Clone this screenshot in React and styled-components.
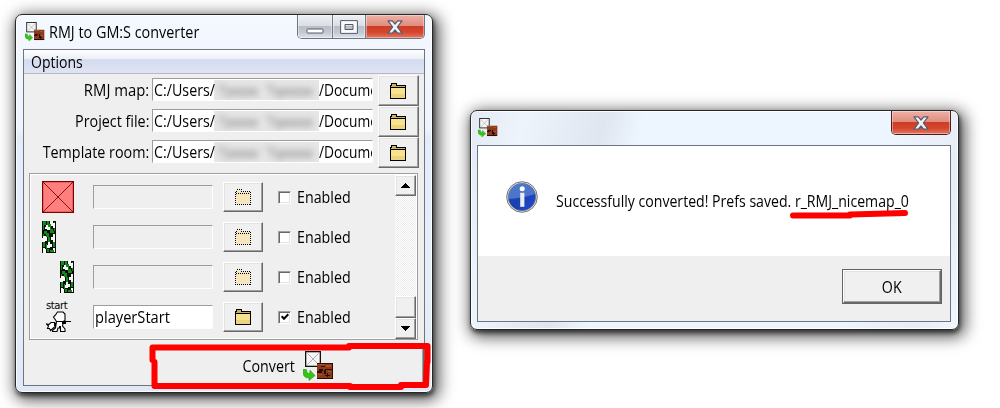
import React from "react";
import styled, { createGlobalStyle, css } from "styled-components";

const Global = createGlobalStyle`
  * { box-sizing: border-box; }
  body { margin: 0; background: #fff; overflow: hidden; }
`;

const Desktop = styled.main`
  position: relative;
  width: 1000px;
  height: 408px;
  overflow: hidden;
  background: #fff;
  font-family: "Open Sans", "Noto Sans", sans-serif;
  font-size: 15.5px;
  line-height: 20px;
  color: #000;
`;

const Window = styled.section`
  position: absolute;
  left: ${(p) => p.$x}px;
  top: ${(p) => p.$y}px;
  width: ${(p) => p.$w}px;
  height: ${(p) => p.$h}px;
  display: flex;
  flex-direction: column;
  border: 1px solid #26282c;
  border-radius: 7px;
  background: ${(p) => p.$glass};
  box-shadow: inset 0 0 0 1px rgba(255, 255, 255, 0.85), 1px 3px 4px rgba(0, 0, 0, 0.55),
    3px 4px 16px 3px rgba(0, 0, 0, 0.66);
`;

const TitleBar = styled.header`
  display: flex;
  align-items: flex-start;
  height: 34px;
  flex: none;
  padding: 0 7px 0 ${(p) => p.$left}px;
`;

const TitleIcon = styled.span`
  display: flex;
  margin-top: 7px;
  width: 24px;
`;

const Text = styled.span`
  display: inline-block;
  white-space: pre;
  transform: scaleX(${(p) => p.$fit || 0.92});
  transform-origin: ${(p) => p.$origin || "left"} center;
`;

const Title = styled.h1`
  margin: 7px 0 0;
  flex: 1;
  font: inherit;
`;

const Controls = styled.div`
  display: flex;
  height: 24px;
  margin-left: auto;
  border: 1px solid ${(p) => (p.$solo ? "#4f1c18" : "#6e7480")};
  border-top: 0;
  border-radius: 0 0 5px 5px;
  overflow: hidden;
`;

const Control = styled.button`
  display: flex;
  align-items: center;
  justify-content: center;
  width: ${(p) => p.$w}px;
  padding: 0;
  border: 0;
  border-right: ${(p) => (p.$close ? 0 : "1px solid #747a86")};
  background: ${(p) =>
    p.$close
      ? "linear-gradient(#efb0a5 0, #e08b7d 48%, #cb3f27 50%, #d6452c 75%, #de7a66 100%)"
      : "linear-gradient(#edf0f5 0, #dadde3 48%, #b9bec8 50%, #c3c9d3 75%, #dce3ed 100%)"};
  box-shadow: inset 0 0 0 1px rgba(255, 255, 255, 0.4);
`;

const Client = styled.div`
  display: flex;
  flex-direction: column;
  flex: 1;
  margin: ${(p) => p.$m};
  border: 1px solid #6f7580;
  background: #efefef;
`;

const MenuBar = styled.nav`
  height: 24px;
  flex: none;
  padding: 2px 7px;
  border-bottom: 1px solid #b4b8c8;
  background: linear-gradient(#fff 0, #eceff8 38%, #d4dbee 42%, #dfe4f4 100%);
`;

const Paths = styled.div`
  padding-top: 1px;
  height: 94px;
  flex: none;
`;

const PathRow = styled.div`
  display: flex;
  align-items: flex-start;
  height: 31px;
`;

const PathLabel = styled.label`
  width: 125px;
  margin-right: 3px;
  text-align: right;
  padding-top: 5px;
`;

const sunken = css`
  border-style: solid;
  border-width: 1px;
  border-color: #9c9c9c #fdfdfd #fdfdfd #9c9c9c;
`;

const Entry = styled.div`
  ${sunken}
  display: flex;
  align-items: center;
  flex: none;
  height: ${(p) => (p.$path ? 23 : 24)}px;
  margin-top: ${(p) => (p.$path ? 3 : 0)}px;
  width: ${(p) => (p.$path ? 221 : 120)}px;
  padding-left: 1px;
  overflow: hidden;
  background: ${(p) => (p.$off ? "#efefef" : "#fff")};
`;

const PathHead = styled.span`
  flex: none;
  width: 60px;
`;

const Redacted = styled.span`
  flex: none;
  width: 105px;
  height: 20px;
  background: #e6e6e6;
  overflow: hidden;
  > svg { display: block; filter: blur(3px); }
`;

const Raised = styled.button`
  display: flex;
  align-items: center;
  justify-content: center;
  width: ${(p) => p.$w}px;
  height: ${(p) => p.$h}px;
  margin-left: ${(p) => p.$gap || 0}px;
  flex: none;
  padding: 0 ${(p) => p.$w % 2}px 0 0;
  border: 1px solid;
  border-color: #fff #696969 #696969 #fff;
  box-shadow: inset -1px -1px #a0a0a0, inset 1px 1px #e3e3e3;
  background: #f0f0f0;
  font: inherit;
  color: inherit;
`;

const Group = styled.div`
  display: flex;
  height: 167px;
  flex: none;
  margin: 5px 6px 0 5px;
  border: 1px solid #9e9e9e;
  box-shadow: inset 1px 1px #fff, inset -1px -1px #fff;
  padding: 1px 1px 0;
`;

const Rows = styled.div`
  flex: 1;
  padding-top: 2px;
`;

const Row = styled.div`
  display: flex;
  align-items: center;
  height: 40px;
  padding-left: 11px;
`;

const Sprite = styled.div`
  display: flex;
  justify-content: ${(p) => (p.$end ? "flex-end" : "flex-start")};
  width: 32px;
  margin-right: 19px;
`;

const StartSprite = styled.div`
  display: flex;
  flex-direction: column;
  width: 32px;
  height: 32px;
  padding-left: 4px;
  font: 10px/10px "DejaVu Sans", sans-serif;
  letter-spacing: -0.4px;
`;

const Check = styled.span`
  display: flex;
  align-items: center;
  justify-content: center;
  width: 13px;
  height: 13px;
  margin: 0 6px 0 15px;
  border: 1px solid;
  border-color: #a0a0a0 #fff #fff #a0a0a0;
  box-shadow: inset 1px 1px #696969, inset -1px -1px #e3e3e3;
  background: #fff;
`;

const Scroll = styled.div`
  display: flex;
  flex-direction: column;
  width: 21px;
  background: repeating-conic-gradient(#fff 0 25%, #ebebeb 0 50%) 0 0 / 2px 2px;
`;

const Track = styled.div`
  flex: 1;
`;

const ConvertButton = styled.button`
  display: flex;
  align-items: center;
  gap: 8px;
  height: 40px;
  margin: 5px 0 0 130px;
  padding: 2px 0 0 84px;
  border: 0;
  border-right: 1px solid #696969;
  box-shadow: inset -1px 0 #a0a0a0;
  background: #efefef;
  font: inherit;
  color: inherit;
`;

const Message = styled.div`
  display: flex;
  align-items: flex-start;
  height: 110px;
  padding: 35px 0 0 28px;
  gap: 18px;
  background: #fff;
`;

const MessageText = styled.p`
  margin: 10px 0 0;
`;

const Actions = styled.footer`
  display: flex;
  justify-content: flex-end;
  padding: 13px 8px 0;
`;

const DefaultFrame = styled.div`
  border: 1px solid #646464;
`;

const Marks = styled.svg`
  position: absolute;
  left: 0;
  top: 0;
  pointer-events: none;
`;

function AppIcon({ size = 31 }) {
  return (
    <svg width={size} height={size} viewBox="0 0 31 31">
      <path d="M2 0h16v16H2z" fill="#111" />
      <path d="M3.300 1.300h13.400v13.400H3.300z" fill="#f6f6f6" />
      <path d="M4.500 2.500l11 11M15.500 2.500l-11 11" stroke="#a5a5a5" strokeWidth=".9" />
      <path d="M14 12h16v16H14z" fill="#8c3a1c" />
      <g shapeRendering="crispEdges">
        <path d="M14 12h16v1H14zM18 15h4v1h-4zM22 18h8v1h-8zM16 18h4v2h-1v2h-2v-2h-1zM14 20h3v2h-3zM21 19h2v4h-2zM24 22h1v4h-1zM14 27h16v1H14zM22 24h5v1h-5zM29 13h1v15h-1z" fill="#2a0d05" />
        <path d="M15 13h6v1h-6zM23 14h5v2h-5zM25 20h3v1h-3zM15 23h4v1h-4z" fill="#a9502d" />
      </g>
      <path d="M0 18.500q-1 6 3 8l3 .4v2.600l6-5-5-5.300-.3 3.400q-3 .2-3.200-4z" fill="#35c516" stroke="#25960f" strokeWidth=".6" />
    </svg>
  );
}

function Folder({ off }) {
  return (
    <svg width="16" height="16" viewBox="0 0 16 16" shapeRendering="crispEdges">
      <path d="M1 2h1V1h5v2h8v12H1z" fill={off ? "#f5e6bd" : "#f7e290"} />
      {!off && <path d="M1 2h1V1h5v2h8v1H1z" fill="#c9b55e" />}
      {!off && <path d="M1 11h14v4H1z" fill="#ecd37d" />}
      <path
        d="M.5 15.500V2.500h1V.5h5v2h9v13zM1 4.500h14"
        fill="none"
        stroke="#000"
        strokeDasharray={off ? "1 1" : undefined}
      />
    </svg>
  );
}

function CloseGlyph() {
  return (
    <svg width="16" height="14" viewBox="0 0 16 14">
      <path d="M1 .8h4.300L8 4 10.700.8H15L10.300 7l4.700 6.200h-4.300L8 10l-2.700 3.200H1L5.700 7z" fill="#f2f2f2" stroke="#545b70" strokeWidth="1.200" strokeLinejoin="round" />
    </svg>
  );
}

function Close({ w }) {
  return <Control $w={w} $close aria-label="Close"><CloseGlyph /></Control>;
}

function Block() {
  return (
    <svg width="32" height="32" viewBox="0 0 32 32">
      <rect x=".5" y=".5" width="31" height="31" fill="#ff7f7f" stroke="#800000" />
      <rect x="1.500" y="1.500" width="29" height="29" fill="none" stroke="#e86464" />
      <path d="M1 1l30 30M31 1L1 31" stroke="#800000" strokeWidth=".9" />
    </svg>
  );
}

function Vine() {
  return (
    <svg width="14" height="32" viewBox="0 0 14 32" shapeRendering="crispEdges">
      <path d="M0 0h14v32H0z" fill="#050d05" />
      <path d="M1 0h3v4H2v5H1zM5 0h2v3h2v5h2v4H8V8H6V4H5zM12 1h1v9h-1zM2 10h3v2h2v4H4v-3H2zM9 10h3v2H9zM1 13h1v2H1zM6 16h2v5H6zM1 21h2v5H1zM11 20h2v6h-2zM4 23h1v5h2v3H5v-3H4zM8 29h4v2H8z" fill="#12891c" />
      <path d="M4 4h2v2h2v3H5V8H3V6h1zM8 0h3v2h2v5h-2V5H9V3H8zM1 15h3v1h1v4H3v1H0v-4h1zM11 13h2v8h-2v-2H9v-3h2zM6 21h2v2h2v3H8v1H5v-3h1zM1 27h2v1h1v4H1zM11 27h2v4h-1v-2h-1z" fill="#f7f7f7" />
    </svg>
  );
}

function Hero() {
  return (
    <svg width="25" height="22" viewBox="0 0 25 22">
      <g fill="#fff" stroke="#000" strokeWidth="1.100">
        <path d="M8.500 11.500H5l-2 2-2.500-.5 2 2-1 2.500h2l1 2 4-3.500 3-1.500z" />
        <path d="M10.500 10.500h7l-1 4.500 2.500 3v2.500h-4.500V17h-2.500l-1 3.500H6.500v-1l3-2.500z" />
        <path d="M8.500 7.500l-1-1.500 2-2 2-3h5.500l2 2v6.500l-2 1h-6.500z" />
      </g>
      <g shapeRendering="crispEdges">
        <path d="M16 10h9v1h-5v2h-4zM8 12h2v3H8zM13 15h2v2h-2z" />
      </g>
    </svg>
  );
}

function InfoIcon() {
  return (
    <svg width="32" height="32" viewBox="0 0 32 32">
      <defs>
        <linearGradient id="orb" x1="0" y1="0" x2="1" y2="1">
          <stop offset="0" stopColor="#1e4fae" />
          <stop offset=".5" stopColor="#1740b0" />
          <stop offset="1" stopColor="#2348d8" />
        </linearGradient>
      </defs>
      <circle cx="16" cy="16" r="15.300" fill="#e7e7e7" stroke="#737373" strokeWidth="1" />
      <circle cx="16" cy="16" r="13.700" fill="url(#orb)" stroke="#687180" strokeWidth=".7" />
      <path d="M2.800 18A13.200 13.200 0 0 1 28.800 13Q19 17 2.800 18z" fill="#7ea6e5" opacity=".5" />
      <circle cx="16.200" cy="7.800" r="2.500" fill="#fff" />
      <path d="M14.200 11.800h4.200v14h-4.200z" fill="#ececec" />
    </svg>
  );
}

function NameBlur() {
  return (
    <svg width="105" height="21" viewBox="0 0 105 21">
      <path d="M3 5h10v3h-3v8H7V8H3zM13 8h31v8H15v3h-3zM51 5h10v3h-2v8h-3V8h-5zM61 8h38v8H68v3h-4v-3h-3z" fill="#bcbcbc" />
    </svg>
  );
}

function Arrow({ down }) {
  return (
    <svg width="9" height="5" viewBox="0 0 9 5" shapeRendering="crispEdges">
      <path d={down ? "M0 0h9v1H8v1H7v1H6v1H5v1H4V4H3V3H2V2H1V1H0z" : "M4 0h1v1h1v1h1v1h1v1h1v1H0V4h1V3h1V2h1V1h1z"} />
    </svg>
  );
}

function Tick() {
  return (
    <svg width="8" height="8" viewBox="0 0 8 8">
      <path d="M.7 3.200L3 5.700 7.300 1.300" fill="none" stroke="#000" strokeWidth="2" />
    </svg>
  );
}

const paths = [
  { label: "RMJ map:", fit: 0.958 },
  { label: "Project file:", fit: 0.925 },
  { label: "Template room:", fit: 0.925 },
];

const objects = [
  { sprite: <Block /> },
  { sprite: <Vine /> },
  { sprite: <Vine />, end: true },
  { sprite: <StartSprite>start<Hero /></StartSprite>, name: "playerStart", on: true },
];

function Converter() {
  return (
    <Window $x={15} $y={14} $w={418} $h={379} $glass="linear-gradient(#f4f8ff 0, #edf4fe 30%, #e3edf9 32%, #e6eefa 75%, #dfe8f4 100%)">
      <TitleBar $left={9}>
        <TitleIcon><AppIcon size={20} /></TitleIcon>
        <Title><Text $fit={0.928}>RMJ to GM:S converter</Text></Title>
        <Controls>
          <Control $w={35} aria-label="Minimize">
            <svg width="18" height="14" viewBox="0 0 18 14"><rect x="1" y="9" width="16" height="4" rx=".8" fill="#fff" stroke="#565b6c" /></svg>
          </Control>
          <Control $w={33} aria-label="Maximize">
            <svg width="18" height="14" viewBox="0 0 18 14"><path d="M.6.6h16.800v12.800H.6zM5 4.500v5h8v-5z" fill="#fafafa" fillRule="evenodd" stroke="#565b6c" /></svg>
          </Control>
          <Close w={58} />
        </Controls>
      </TitleBar>
      <Client $m="0 7px 6px">
        <MenuBar><Text $fit={0.905}>Options</Text></MenuBar>
        <Paths>
          {paths.map(({ label, fit }) => (
            <PathRow key={label}>
              <PathLabel><Text $origin="right" $fit={fit}>{label}</Text></PathLabel>
              <Entry $path>
                <PathHead><Text>C:/Users/</Text></PathHead>
                <Redacted><NameBlur /></Redacted>
                <Text $fit={0.89}>/Docume</Text>
              </Entry>
              <Raised $w={41} $h={31} $gap={5}><Folder /></Raised>
            </PathRow>
          ))}
        </Paths>
        <Group>
          <Rows>
            {objects.map((o, i) => (
              <Row key={i}>
                <Sprite $end={o.end}>{o.sprite}</Sprite>
                <Entry $off={!o.on}>{o.name && <Text $fit={0.945}>{o.name}</Text>}</Entry>
                <Raised $w={40} $h={30} $gap={10}><Folder off={!o.on} /></Raised>
                <Check>{o.on && <Tick />}</Check>
                <Text>Enabled</Text>
              </Row>
            ))}
          </Rows>
          <Scroll>
            <Raised $w={21} $h={21}><Arrow /></Raised>
            <Track />
            <Raised $w={21} $h={22} tabIndex={-1} />
            <Raised $w={21} $h={21}><Arrow down /></Raised>
          </Scroll>
        </Group>
        <ConvertButton><Text $origin="right">Convert</Text><AppIcon /></ConvertButton>
      </Client>
    </Window>
  );
}

function ResultDialog() {
  return (
    <Window $x={470} $y={110} $w={489} $h={220} $glass="linear-gradient(105deg, #e2e9f2 0, #eef4fc 10%, #dfe6ef 25%, #edf5fe 32%, #edf5fe 78%, #e6edf7 92%, #f0f6fe 100%)">
      <TitleBar $left={7}>
        <TitleIcon><AppIcon size={20} /></TitleIcon>
        <Controls $solo><Close w={58} /></Controls>
      </TitleBar>
      <Client $m="0 7px 7px 6px">
        <Message>
          <InfoIcon />
          <MessageText><Text $fit={0.91}>Successfully converted! Prefs saved. r_RMJ_nicemap_0</Text></MessageText>
        </Message>
        <Actions>
          <DefaultFrame><Raised $w={98} $h={33}><Text $origin="center">OK</Text></Raised></DefaultFrame>
        </Actions>
      </Client>
    </Window>
  );
}

export default function App() {
  return (
    <Desktop>
      <Global />
      <Converter />
      <ResultDialog />
      <Marks width="1000" height="408" viewBox="0 0 1000 408">
        <g fill="none" stroke="#f00" strokeWidth="6" strokeLinejoin="round" strokeLinecap="round">
          <path d="M152.500 347.500H349M349 346h78.500v16M427 362l-1 22.500M426 385h-25M401 387h-51M350 386H154.500v-24M152.500 360v-12.500" />
          <path d="M793 215.500h57M850 214.500l55-1.500" />
        </g>
      </Marks>
    </Desktop>
  );
}
